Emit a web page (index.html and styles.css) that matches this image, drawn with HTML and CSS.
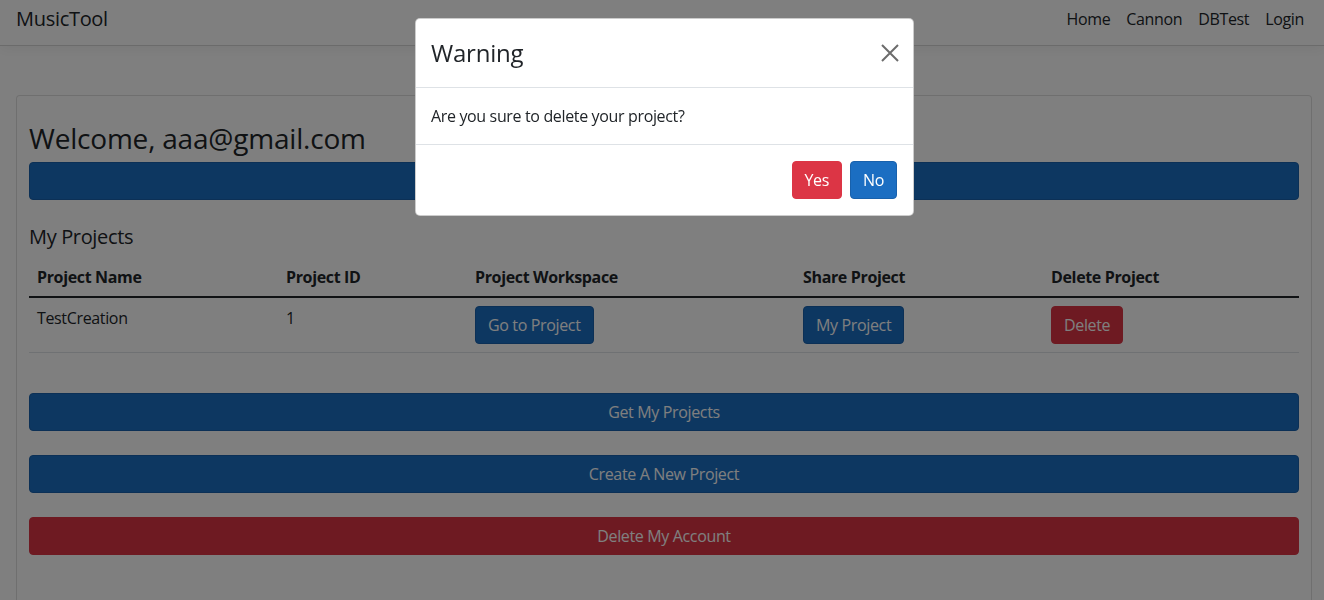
FILE: index.html
```html
<!DOCTYPE html>
<html lang="en">
<head>
<meta charset="utf-8">
<title>MusicTool</title>
<link rel="stylesheet" href="styles.css">
</head>
<body>
<header class="navbar">
  <a class="brand" href="#">MusicTool</a>
  <nav class="nav-links">
    <a href="#">Home</a>
    <a href="#">Cannon</a>
    <a href="#">DBTest</a>
    <a href="#">Login</a>
  </nav>
</header>

<main class="page">
  <section class="card">
    <div class="card-body">
      <h3 class="welcome">Welcome, aaa@gmail.com</h3>
      <button class="btn btn-primary btn-block">&nbsp;</button>

      <h5 class="section-title">My Projects</h5>
      <table class="table">
        <thead>
          <tr>
            <th class="col-name">Project Name</th>
            <th class="col-id">Project ID</th>
            <th class="col-ws">Project Workspace</th>
            <th class="col-share">Share Project</th>
            <th class="col-del">Delete Project</th>
          </tr>
        </thead>
        <tbody>
          <tr>
            <td>TestCreation</td>
            <td>1</td>
            <td><button class="btn btn-primary">Go to Project</button></td>
            <td><button class="btn btn-primary">My Project</button></td>
            <td><button class="btn btn-danger">Delete</button></td>
          </tr>
        </tbody>
      </table>

      <div class="actions">
        <button class="btn btn-primary btn-block">Get My Projects</button>
        <button class="btn btn-primary btn-block">Create A New Project</button>
        <button class="btn btn-danger btn-block">Delete My Account</button>
      </div>
    </div>
  </section>
</main>

<div class="backdrop"></div>

<div class="modal" role="dialog" aria-modal="true">
  <div class="modal-header">
    <h4 class="modal-title">Warning</h4>
    <button class="btn-close" aria-label="Close">
      <svg width="18" height="18" viewBox="0 0 18 18" aria-hidden="true">
        <path d="M1 1 L17 17 M17 1 L1 17" stroke="currentColor" stroke-width="2" fill="none"/>
      </svg>
    </button>
  </div>
  <div class="modal-body">Are you sure to delete your project?</div>
  <div class="modal-footer">
    <button class="btn btn-danger">Yes</button>
    <button class="btn btn-primary">No</button>
  </div>
</div>
</body>
</html>
```

FILE: styles.css
```css
* { box-sizing: border-box; }

html, body {
  margin: 0;
  padding: 0;
  background: #fff;
  color: #212529;
  font-family: "Open Sans", "Noto Sans", sans-serif;
  font-size: 16px;
  line-height: 24px;
  letter-spacing: -0.35px;
  overflow: hidden;
}

a { color: inherit; text-decoration: none; }

.navbar {
  display: flex;
  align-items: center;
  justify-content: space-between;
  height: 46px;
  padding: 0 12px 7px 16px;
  border-bottom: 1px solid #d6d6d6;
  box-shadow: 0 4px 12px rgba(0,0,0,.05);
  background: #fff;
}

.brand {
  font-size: 20px;
  line-height: 30px;
  letter-spacing: -0.3px;
  color: #212529;
}

.nav-links {
  display: flex;
}
.nav-links a {
  padding: 3px 8px;
  line-height: 24px;
  color: #212529;
}

.page {
  padding: 49px 12px 0 16px;
}

.card {
  border: 1px solid rgba(0,0,0,.125);
  border-radius: 4px;
  background: #fff;
}

.card-body {
  padding: 12px 12px 60px;
}

.welcome {
  font-size: 28px;
  line-height: 34px;
  font-weight: 500;
  letter-spacing: -0.2px;
  margin: 13px 0 7px;
}

.btn {
  display: inline-block;
  font-family: inherit;
  font-size: 16px;
  line-height: 24px;
  letter-spacing: -0.35px;
  padding: 6px 12px;
  border: 1px solid transparent;
  border-radius: 4px;
  color: #fff;
  cursor: pointer;
  text-align: center;
}
.btn-primary {
  background: #1b6ec2;
  border-color: #1861ac;
}
.btn-danger {
  background: #dc3545;
  border-color: #dc3545;
}
.btn-block {
  display: block;
  width: 100%;
}

.section-title {
  font-size: 20px;
  line-height: 24px;
  font-weight: 500;
  letter-spacing: -0.35px;
  margin: 25px 0 8px;
}

.table {
  width: 100%;
  border-collapse: collapse;
  margin-bottom: 40px;
}
.table th,
.table td {
  padding: 8px;
  text-align: left;
  vertical-align: top;
}
.table th {
  font-weight: 700;
  padding-bottom: 7px;
  border-bottom: 2px solid #212529;
}
.table td {
  border-bottom: 1px solid #dee2e6;
}
.col-name { width: 249px; }
.col-id { width: 189px; }
.col-ws { width: 328px; }
.col-share { width: 248px; }

.actions {
  display: flex;
  flex-direction: column;
  gap: 24px;
}

.backdrop {
  position: fixed;
  inset: 0;
  background: rgba(0,0,0,.5);
}

.modal {
  position: fixed;
  top: 18px;
  left: 415px;
  width: 499px;
  background: #fff;
  border: 1px solid rgba(0,0,0,.2);
  border-radius: 5px;
}

.modal-header {
  display: flex;
  align-items: center;
  justify-content: space-between;
  padding: 16px 16px 16px 15px;
  border-bottom: 1px solid #dee2e6;
}
.modal-title {
  margin: 0;
  font-size: 24px;
  line-height: 36px;
  font-weight: 500;
  letter-spacing: -0.2px;
}
.btn-close {
  background: none;
  border: 0;
  padding: 0;
  margin-right: -2px;
  color: #6c6c6c;
  display: flex;
  cursor: pointer;
}

.modal-body {
  padding: 16px 16px 16px 15px;
}

.modal-footer {
  display: flex;
  justify-content: flex-end;
  gap: 8px;
  padding: 16px;
  border-top: 1px solid #dee2e6;
}
```
